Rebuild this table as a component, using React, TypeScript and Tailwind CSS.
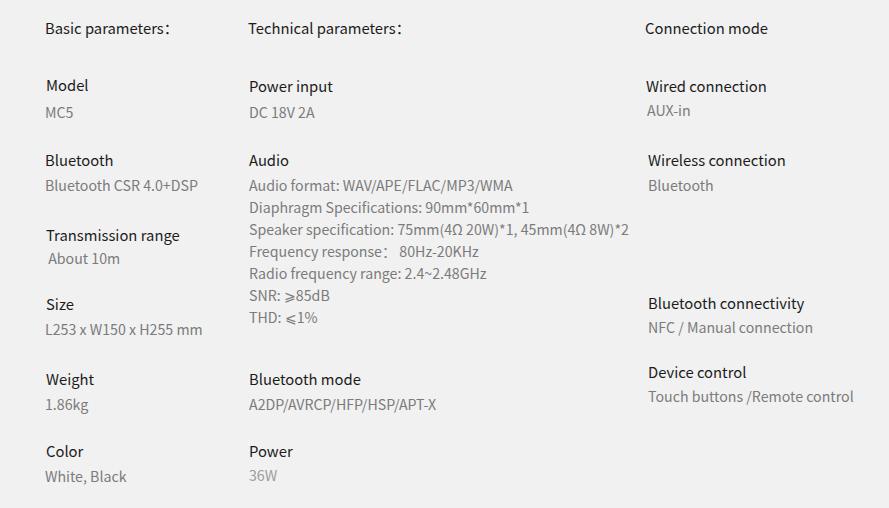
type Item = { label: string; values: string[]; top: string; vTop?: string; indent?: string; vIndent?: string; light?: boolean };

const font = { fontFamily: '"Noto Sans CJK SC", "Noto Sans", sans-serif' };

const basic: Item[] = [
  { label: "Model", values: ["MC5"], top: "mt-[31px]", vTop: "mt-[3px]", indent: "pl-px" },
  { label: "Bluetooth", values: ["Bluetooth CSR 4.0+DSP"], top: "mt-[24px]", vTop: "mt-[1px]" },
  { label: "Transmission range", values: ["\u00a0About 10m"], top: "mt-[26px]", vTop: "-mt-px", indent: "pl-px" },
  { label: "Size", values: ["L253 x W150 x H255 mm"], top: "mt-[22px]", vTop: "mt-[1px]", indent: "pl-px" },
  { label: "Weight", values: ["1.86kg"], top: "mt-[26px]", vTop: "mt-[1px]", indent: "pl-px" },
  { label: "Color", values: ["White, Black"], top: "mt-[23px]", vTop: "mt-[1px]", indent: "pl-px" },
];

const technical: Item[] = [
  { label: "Power input", values: ["DC 18V 2A"], top: "mt-[32px]", vTop: "mt-[2px]", indent: "pl-px", vIndent: "pl-px" },
  {
    label: "Audio",
    values: [
      "Audio format: WAV/APE/FLAC/MP3/WMA",
      "Diaphragm Specifications: 90mm*60mm*1",
      "Speaker specification: 75mm(4\u03a9 20W)*1, 45mm(4\u03a9 8W)*2",
      "Frequency response\uff1a 80Hz-20KHz",
      "Radio frequency range: 2.4~2.48GHz",
      "SNR: \u2a7e85dB",
      "THD: \u2a7d1%",
    ],
    top: "mt-[24px]",
    vTop: "mt-[1px]",
    indent: "pl-px",
    vIndent: "pl-px",
  },
  { label: "Bluetooth mode", values: ["A2DP/AVRCP/HFP/HSP/APT-X"], top: "mt-[38px]", vTop: "mt-[1px]", indent: "pl-px", vIndent: "pl-px" },
  { label: "Power", values: ["36W"], top: "mt-[23px]", vTop: "mt-0", indent: "pl-px", vIndent: "pl-px", light: true },
];

const connection: Item[] = [
  { label: "Wired connection", values: ["AUX-in"], top: "mt-[32px]", vTop: "mt-0", indent: "pl-px", vIndent: "pl-[2px]" },
  { label: "Wireless connection", values: ["Bluetooth"], top: "mt-[26px]", vTop: "mt-[1px]", indent: "pl-[3px]", vIndent: "pl-[3px]" },
  { label: "Bluetooth connectivity", values: ["NFC / Manual connection"], top: "mt-[94px]", vTop: "mt-0", indent: "pl-[3px]", vIndent: "pl-[3px]" },
  { label: "Device control", values: ["Touch buttons /Remote control"], top: "mt-[21px]", vTop: "mt-0", indent: "pl-[3px]", vIndent: "pl-[3px]" },
];

const Column = ({ title, items, width }: { title: string; items: Item[]; width: string }) => (
  <div className={`flex flex-col ${width}`}>
    <div className="text-[14.8px] leading-[26px] text-[#1c1c1c]">{title}</div>
    {items.map((it) => (
      <div key={it.label} className={`flex flex-col ${it.top}`}>
        <div className={`text-[14.8px] leading-[26px] text-[#1c1c1c] ${it.indent ?? ""}`}>{it.label}</div>
        <div className={`flex flex-col ${it.vTop ?? ""} ${it.vIndent ?? ""}`}>
          {it.values.map((v) => (
            <div
              key={v}
              className={`whitespace-pre text-[14.2px] leading-[22px] ${it.light ? "text-[#9c9c9c]" : "text-[#7b7b7b]"}`}
            >
              {v}
            </div>
          ))}
        </div>
      </div>
    ))}
  </div>
);

export default function App() {
  return (
    <div style={font} className="flex h-[508px] w-[889px] bg-[#f1f1f1] pl-[45px] pt-[15px]">
      <Column title={"Basic parameters\uff1a"} items={basic} width="w-[203px]" />
      <Column title={"Technical parameters\uff1a"} items={technical} width="w-[397px]" />
      <Column title="Connection mode" items={connection} width="w-[240px]" />
    </div>
  );
}
